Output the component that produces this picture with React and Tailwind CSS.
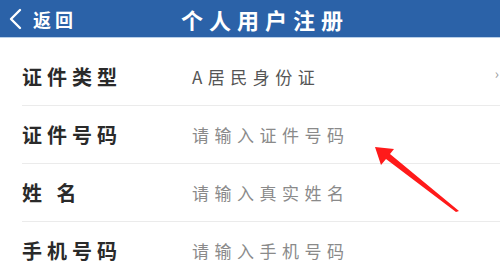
import React from 'react';

const rows = [
  { label: '证件类型', value: 'A居民身份证', filled: true, arrow: true },
  { label: '证件号码', value: '请输入证件号码' },
  { label: '姓 名', value: '请输入真实姓名' },
  { label: '手机号码', value: '请输入手机号码' },
];

export default function App() {
  return (
    <div
      className="relative w-[500px] h-[272px] overflow-hidden bg-white"
      style={{ fontFamily: '"Noto Sans CJK SC", "Noto Sans", sans-serif' }}
    >
      {/* Header */}
      <div className="relative h-[37px] bg-[#2b62a8] flex items-center">
        <div className="flex items-center pl-[8px] text-white">
          <svg width="16" height="22" viewBox="0 0 16 22" fill="none">
            <path d="M12 2 L3 11 L12 20" stroke="white" strokeWidth="2.4" strokeLinecap="round" strokeLinejoin="round" />
          </svg>
          <span className="ml-[9px] text-[18px] font-bold tracking-[4px] leading-none">返回</span>
        </div>
        <div className="absolute inset-0 flex items-center justify-center pl-[30px]">
          <span className="text-white text-[22px] font-bold tracking-[6px] leading-none">个人用户注册</span>
        </div>
      </div>
      <div className="h-[1px] bg-[#b9cfe8]" />

      {/* Form */}
      <div className="pt-[10px]">
        {rows.map((r, i) => (
          <div key={i}>
            <div className="h-[57px] flex items-center pl-[22px] relative">
              <span className="w-[170px] text-[20px] font-semibold tracking-[5px] text-[#2a2a2a] leading-none whitespace-pre">
                {r.label}
              </span>
              <span
                className={
                  'text-[17px] tracking-[5.5px] leading-none ' +
                  (r.filled ? 'text-[#555]' : 'text-[#8a8a8a]')
                }
              >
                {r.value}
              </span>
              {r.arrow && (
                <span className="absolute right-[1px] top-[18px] text-[#999] text-[14px] leading-none">›</span>
              )}
            </div>
            {i < rows.length - 1 && <div className="ml-[22px] h-[1px] bg-[#ebebeb]" />}
          </div>
        ))}
      </div>

      {/* Red annotation arrow */}
      <svg className="absolute left-0 top-0" width="500" height="272" viewBox="0 0 500 272">
        <polygon
          points="375,147 394,149 390,154 459,211 456,212 386,159 381,165"
          fill="#ff1a1a"
        />
      </svg>
    </div>
  );
}
